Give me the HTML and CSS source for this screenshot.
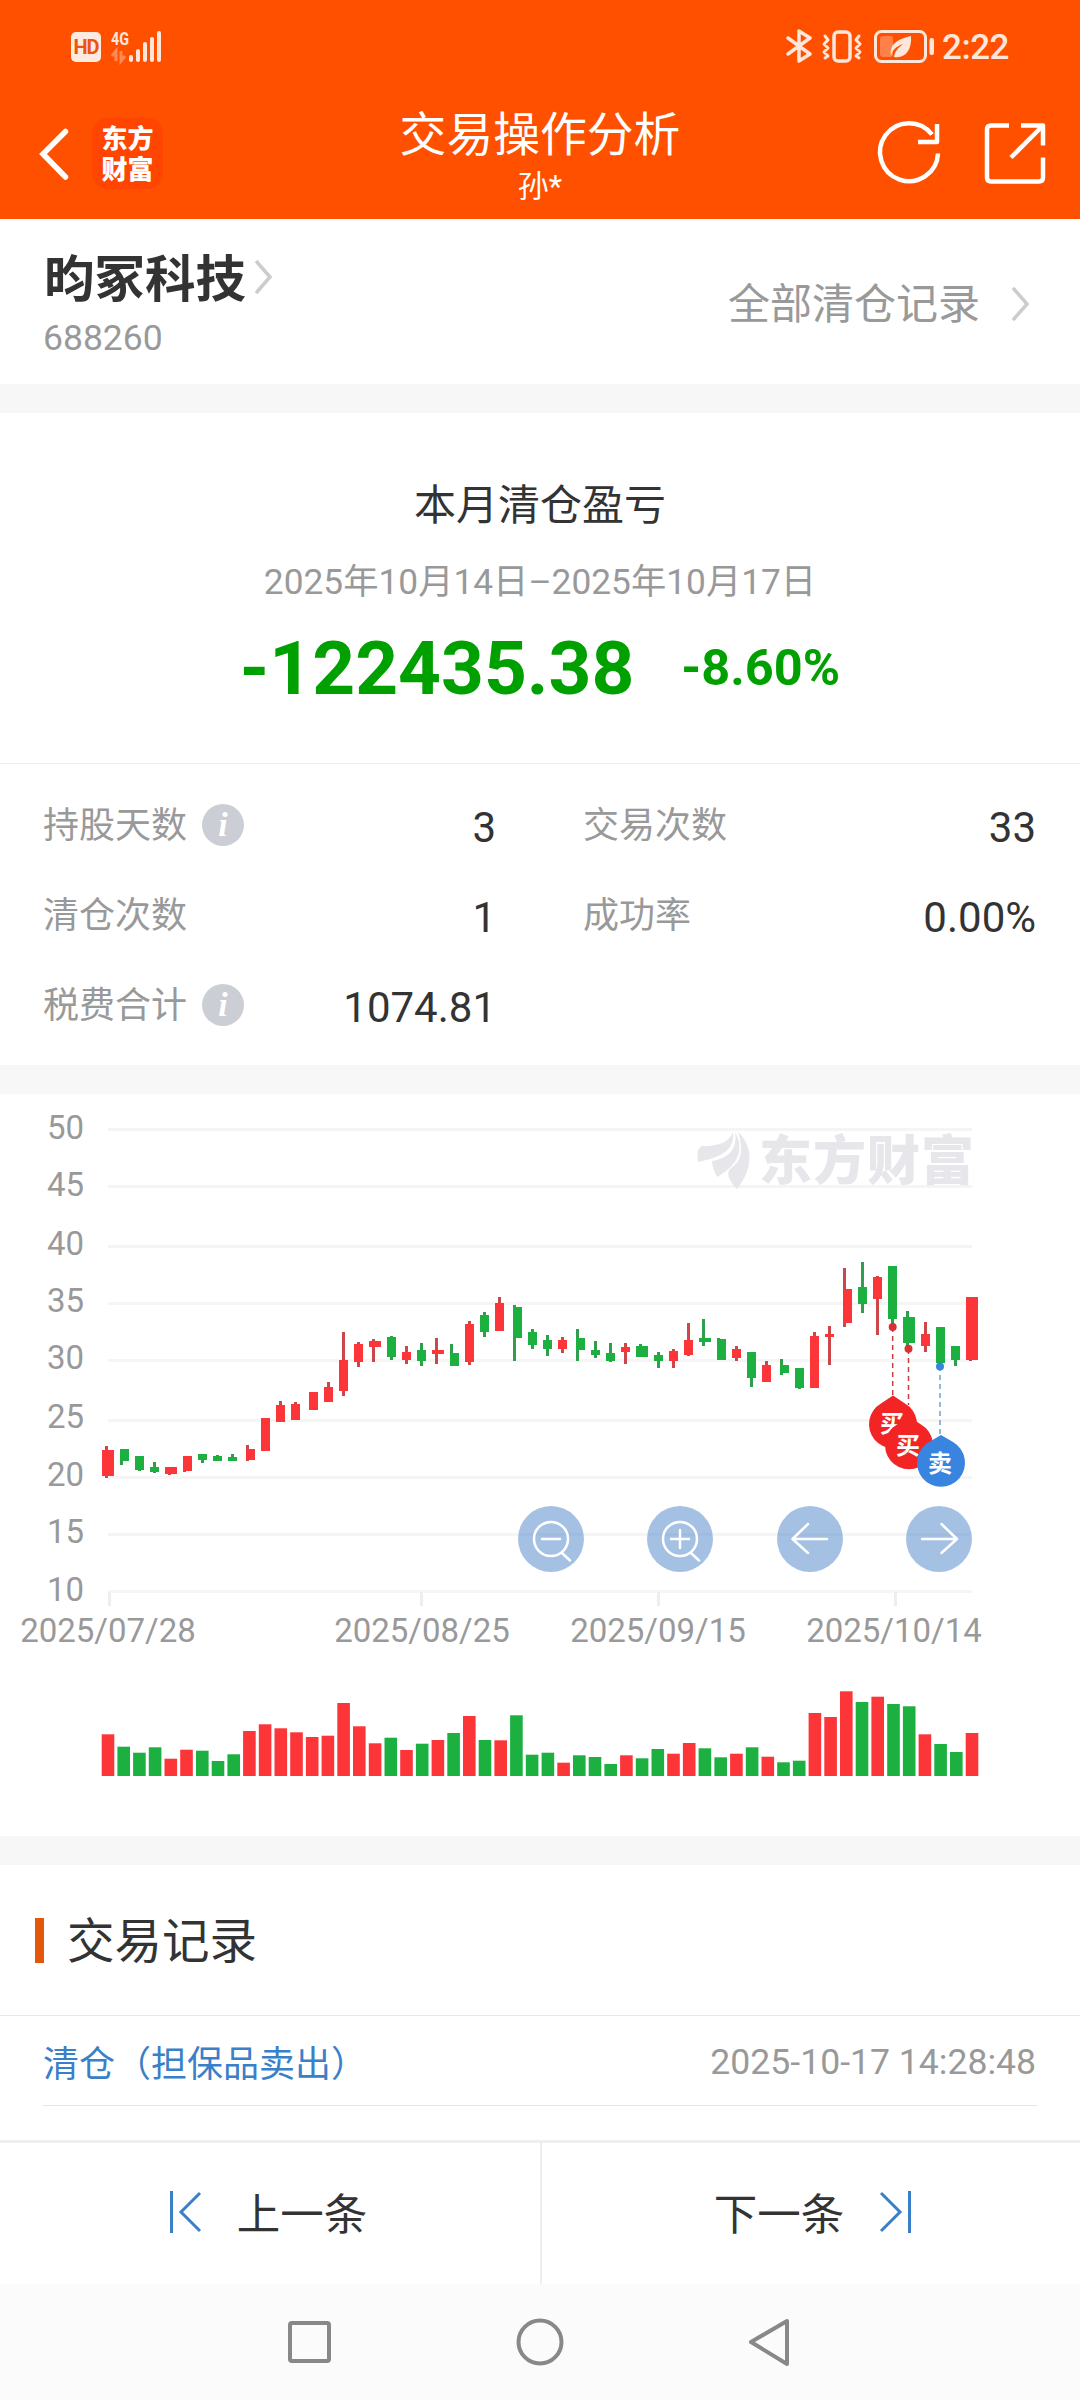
FILE: index.html
```html
<!DOCTYPE html>
<html lang="zh-CN">
<head>
<meta charset="utf-8">
<title>交易操作分析</title>
<link rel="stylesheet" href="styles.css">
</head>
<body>
<header class="header">
  <div class="statusbar">
    <div class="status-left">
      <span class="hd">HD</span>
      <svg class="signal" width="52" height="48" viewBox="110 22 52 48">
        <text class="net" x="111" y="45" textLength="18" lengthAdjust="spacingAndGlyphs">4G</text>
        <path class="signal-data" d="M112 56l4-5v10M121 51v10l4-5"/>
        <path class="signal-bars" d="M131 57v3M138 51v9M145 44v16M152 39v21M159 33v27"/>
      </svg>
    </div>
    <div class="status-right">
      <svg width="150" height="34" viewBox="785 29 150 34">
        <path class="st-line" d="M788 38l22 16-11 7V31l11 7-22 16"/>
        <rect class="st-line" x="834" y="32" width="16" height="29" rx="4"/>
        <path class="st-line thin" d="M825 36l3 4-4 4 4 4-4 4 4 4-3 2M859 36l-3 4 4 4-4 4 4 4-4 4 3 2"/>
        <rect class="st-line thin" x="875.500" y="31.500" width="50" height="30" rx="6"/>
        <rect class="charge" x="880" y="36" width="13" height="21" rx="3"/>
        <path class="leaf" d="M911 36c-13 3-22 8-20 20 1-6 6-10 12-12-5 4-8 7-9 13 12 2 18-8 17-21z"/>
        <rect class="leaf" x="929.500" y="38" width="4.500" height="17" rx="2"/>
      </svg>
      <span class="clock">2:22</span>
    </div>
  </div>
  <div class="appbar">
    <div class="appbar-left">
      <svg class="back" width="34" height="56" viewBox="38 126 34 56"><path d="M65.500 131.500L43 154l22.500 23"/></svg>
      <div class="brand"><span>东方</span><span>财富</span></div>
    </div>
    <div class="titles">
      <h1>交易操作分析</h1>
      <p>孙*</p>
    </div>
    <svg class="actions" width="180" height="70" viewBox="870 118 180 70">
      <path d="M932 134.500A29 29 0 1 0 938 153.500M937 124v18h-19"/>
      <path d="M1009 125.500h-18q-4 0-4 4v48q0 4 4 4h48q4 0 4-4v-20M1021 125.500h22v20M1043 125.500l-32 32"/>
    </svg>
  </div>
</header>

<section class="stock">
  <div>
    <div class="stock-name">昀冢科技<svg width="18" height="36" viewBox="0 0 18 36"><path d="M1 2l14 16L1 34"/></svg></div>
    <div class="stock-code">688260</div>
  </div>
  <a class="all-link">全部清仓记录<svg width="18" height="36" viewBox="0 0 18 36"><path d="M1 2l14 16L1 34"/></svg></a>
</section>

<section class="summary">
  <h2>本月清仓盈亏</h2>
  <p class="range">2025年10月14日–2025年10月17日</p>
  <div class="profit"><strong>-122435.38</strong><b>-8.60%</b></div>
</section>

<section class="stats">
  <div class="stat"><span>持股天数</span><i class="info">i</i><em>3</em></div>
  <div class="stat"><span>交易次数</span><em>33</em></div>
  <div class="stat"><span>清仓次数</span><em>1</em></div>
  <div class="stat"><span>成功率</span><em>0.00%</em></div>
  <div class="stat"><span>税费合计</span><i class="info">i</i><em>1074.81</em></div>
</section>

<section class="chart">
  <svg width="1080" height="742" viewBox="0 1094 1080 742">
    <path class="grid" d="M108 1129.500h864M108 1186.500h864M108 1246.500h864M108 1303.500h864M108 1360.500h864M108 1420.500h864M108 1477.500h864M108 1534.500h864M108 1591.500h864"/>
    <path class="grid tick" d="M109.500 1592v14M421.500 1592v14M658.500 1592v14M895.500 1592v14"/>
    <g class="mark">
      <path d="M698 1162C697 1153 698 1148 702 1146C716 1146 728 1144 733 1132C735 1150 722 1157 698 1162z"/>
      <path d="M735 1132C745 1150 738 1165 717 1177C714 1171 712 1165 712 1161C728 1158 738 1150 735 1132z"/>
      <path d="M738 1132C753 1146 754 1168 737 1189C728 1180 726 1172 731 1168C743 1160 743 1148 738 1132z"/>
      <text x="759" y="1180" textLength="215">东方财富</text>
    </g>
    <g class="axis axis-y">
      <text x="84" y="1139">50</text><text x="84" y="1196">45</text><text x="84" y="1255">40</text>
      <text x="84" y="1312">35</text><text x="84" y="1369">30</text><text x="84" y="1428">25</text>
      <text x="84" y="1486">20</text><text x="84" y="1543">15</text><text x="84" y="1601">10</text>
    </g>
    <g class="axis axis-x">
      <text x="108" y="1642">2025/07/28</text><text x="422" y="1642">2025/08/25</text>
      <text x="658" y="1642">2025/09/15</text><text x="894" y="1642">2025/10/14</text>
    </g>
    <g id="candles" shape-rendering="crispEdges"></g>
    <g id="volumes"></g>
    <g class="buy">
      <path class="dash" d="M892.700 1327v70"/><circle cx="892.700" cy="1327" r="4"/>
      <path d="M893 1395.500l12 8a24 24 0 1 1-24 0z"/>
      <text x="892" y="1432">买</text>
      <path d="M909 1416.500l12 8a24 24 0 1 1-24 0z"/>
      <path class="dash" d="M908.500 1349v56"/><circle cx="908.500" cy="1348.700" r="4"/>
      <text x="908" y="1454">买</text>
    </g>
    <g class="sell">
      <path class="dash" d="M940 1366v70"/><circle cx="940" cy="1366.500" r="4"/>
      <path d="M941 1435l12 7a24 24 0 1 1-24 0z"/>
      <text x="940" y="1472">卖</text>
    </g>
    <g class="tool">
      <circle cx="551" cy="1539" r="33"/><circle cx="680" cy="1539" r="33"/><circle cx="810" cy="1539" r="33"/><circle cx="939" cy="1539" r="33"/>
      <path d="M568 1539a17 17 0 1 0-34 0a17 17 0 1 0 34 0zM542 1539h18M562 1553l8 7.500"/>
      <path d="M697 1539a17 17 0 1 0-34 0a17 17 0 1 0 34 0zM671 1539h18M680 1530v18M691 1553l8 7.500"/>
      <path d="M827 1539h-34M808 1524l-15.500 15 15.500 14"/>
      <path d="M922 1539h34M941.500 1524l15.500 15-15.500 14"/>
    </g>
  </svg>
</section>

<section class="records">
  <h3>交易记录</h3>
  <div class="record"><span>清仓（担保品卖出）</span><time>2025-10-17 14:28:48</time></div>
</section>

<nav class="pager">
  <a><svg width="34" height="44" viewBox="0 0 34 44"><path d="M2.500 1v42M31 3L12 22l19 19"/></svg>上一条</a>
  <a>下一条<svg width="34" height="44" viewBox="0 0 34 44"><path d="M31.500 1v42M3 3l19 19L3 41"/></svg></a>
</nav>

<footer class="sysnav">
  <svg width="510" height="52" viewBox="285 2316 510 52">
    <rect x="290" y="2323" width="39" height="38" rx="2"/>
    <circle cx="540" cy="2342" r="21.500"/>
    <path d="M787 2321v43L751 2342z"/>
  </svg>
</footer>
<script src="chart.js"></script>
</body>
</html>
```
FILE: styles.css
```css
* { box-sizing: border-box; margin: 0; padding: 0; }
body {
  width: 1080px;
  height: 2400px;
  overflow: hidden;
  background: #fff;
  color: #333;
  font-family: Roboto, "Noto Sans CJK SC", sans-serif;
  display: flex;
  flex-direction: column;
}
svg { display: block; flex: none; fill: none; }
h1, h2, h3 { font-weight: 400; }

.header { height: 219px; background: #ff5000; color: #fff; }
.statusbar { height: 92px; padding: 0 71px; display: flex; justify-content: space-between; align-items: center; }
.status-left, .status-right { display: flex; align-items: center; }
.hd {
  width: 30px; height: 30px; margin: 2px 9px 0 0;
  border-radius: 5px; background: #ffeae0; color: #e8560f;
  font: 700 20px/30px Roboto, sans-serif; text-align: center; letter-spacing: -1px;
}
.net { fill: #ffe6da; font: 700 19px Roboto, sans-serif; }
.signal-data { stroke: #ff8a55; stroke-width: 3; }
.signal-bars { stroke: #ffe6da; stroke-width: 4; stroke-linecap: round; }
.st-line { stroke: #ffe6da; stroke-width: 3.5; stroke-linejoin: round; stroke-linecap: round; }
.thin { stroke-width: 3; }
.charge { fill: #ff8048; }
.leaf { fill: #ffe6da; }
.clock { margin: 3px 0 0 7px; color: #ffe6da; font-size: 35px; font-weight: 500; line-height: 36px; letter-spacing: -.5px; }
.appbar { height: 127px; padding: 0 30px 0 38px; display: grid; grid-template-columns: 240px 1fr 240px; }
.appbar-left { display: flex; gap: 20px; padding-top: 26px; }
.back { margin-top: 8px; }
.back path { stroke: #fff; stroke-width: 5.500; stroke-linecap: round; }
.brand {
  width: 71px; height: 71px; border-radius: 15px; background: #ff4500;
  display: flex; flex-direction: column; align-items: center; padding-top: 3px;
  font: 900 26px/31px "Noto Sans CJK SC", sans-serif;
}
.titles { text-align: center; padding-right: 8px; }
.titles h1 { font-size: 46.800px; line-height: 60px; margin-top: 13px; }
.titles p { font-size: 31px; line-height: 40px; margin-top: 2px; }
.actions { justify-self: end; margin-top: 26px; }
.actions path { stroke: #fff; stroke-width: 4.500; stroke-linejoin: round; }

.stock { height: 165px; padding: 0 50px 0 43px; display: flex; justify-content: space-between; align-items: flex-start; }
.stock svg path { stroke: #ccc; stroke-width: 3.500; }
.stock-name { display: flex; align-items: center; font-weight: 700; font-size: 50.500px; line-height: 64px; margin: 29px 0 0 1px; }
.stock-name svg { margin: -6px 0 0 9px; }
.stock-code { font-size: 35.500px; line-height: 44px; margin-top: 4px; color: #999; }
.all-link { display: flex; align-items: center; margin-top: 58px; font-size: 42px; line-height: 56px; color: #999; }
.all-link svg { margin: -2px 0 0 32px; }

.summary { height: 380px; border-top: 29px solid #f7f7f7; border-bottom: 1px solid #eee; text-align: center; }
.summary h2 { font-size: 42px; line-height: 60px; margin-top: 63px; }
.range { font-size: 35.300px; line-height: 50px; margin-top: 21px; color: #999; }
.profit { display: flex; justify-content: center; align-items: center; gap: 47px; height: 90px; margin-top: 16px; color: #00a000; }
.profit strong { font-size: 74.800px; font-weight: 700; }
.profit b { font-size: 50.500px; margin-top: -2px; }

.stats { height: 301px; padding: 16px 44px 0 43px; display: grid; grid-template-columns: 453px 1fr; grid-auto-rows: 90px; column-gap: 87px; }
.stat { display: flex; align-items: center; font-size: 36px; color: #999; }
.stat span { margin-top: -6px; }
.stat em { margin: 4px 0 0 auto; font-style: normal; font-size: 42px; color: #333; }
.info {
  width: 42px; height: 42px; margin-left: 15px; border-radius: 50%; background: #cbced4; color: #fff;
  font: italic 700 34px/42px "Liberation Serif", serif; text-align: center;
}

.chart { height: 800px; border-top: 29px solid #f7f7f7; border-bottom: 29px solid #f7f7f7; }
.grid { stroke: #f5f5f5; stroke-width: 3; }
.tick { stroke: #eee; }
.mark { fill: #e6e6eb; font: 900 53px "Noto Sans CJK SC", sans-serif; }
.axis { fill: #999; font-size: 33px; }
.axis-y { text-anchor: end; }
.axis-x { text-anchor: middle; }
.up { fill: #fc3539; }
.down { fill: #1bb040; }
.wick.up { fill: #cc474b; }
.wick.down { fill: #2f9e4d; }
.buy { fill: #f22424; stroke: none; }
.sell { fill: #3884df; }
.buy text, .sell text { fill: #fff; font: 700 24px "Noto Sans CJK SC", sans-serif; text-anchor: middle; }
.buy circle { fill: #d93030; }
.dash { stroke-width: 1.500; stroke-dasharray: 5 4; stroke: #c84040; }
.sell .dash { stroke: #70a0cc; }
.tool circle { fill: rgba(73, 131, 199, .5); }
.tool path { stroke: #fff; stroke-width: 2.500; stroke-linecap: round; stroke-linejoin: round; }

.records { flex: 1; }
.records h3 { height: 151px; border-bottom: 1px solid #e8e8e8; padding: 0 0 0 35px; display: flex; align-items: center; gap: 23px; font-size: 47.500px; line-height: 60px; padding-top: 4px; }
.records h3::before { content: ""; width: 9px; height: 45px; margin-top: -4px; background: #e2570a; }
.record { height: 90px; margin: 0 43px; padding-right: 1px; border-bottom: 1px solid #e8e8e8; display: flex; align-items: center; justify-content: space-between; font-size: 36px; color: #3a80c8; }
.record time { color: #999; font-size: 35.600px; margin-top: 3px; }

.pager { height: 144px; border-top: 3px solid #eee; display: grid; grid-template-columns: 542px 1fr; }
.pager a { display: flex; align-items: center; justify-content: center; gap: 34px; font-size: 43.500px; padding-bottom: 4px; }
.pager a:first-child { border-right: 2px solid #eee; padding-right: 4px; }
.pager a:last-child { padding-left: 4px; }
.pager path { stroke: #3a80c8; stroke-width: 3; }
.sysnav { height: 116px; background: #fbfbfb; display: flex; justify-content: center; align-items: center; }
.sysnav svg { stroke: #888; stroke-width: 4; stroke-linejoin: round; }
```
FILE: chart.js
```js
// Each candle: direction, body left/width/top/bottom, wick left/top/bottom
const candles = [
  ['u',102,12,1450,1476,105,1446,1478],['d',120,9,1449,1461,120,1449,1465],['d',135,9,1456,1470,138,1456,1471],
  ['d',150,9,1467,1472,153,1462,1473],['u',165,12,1467,1474,168,1467,1475],['u',183,9,1456,1471,183,1456,1472],
  ['d',198,9,1454,1460,201,1454,1463],['d',213,9,1456,1461,216,1455,1461],['d',228,9,1457,1461,231,1454,1461],
  ['u',246,9,1449,1460,246,1445,1461],['u',261,9,1418,1451,264,1418,1451],['u',276,9,1405,1422,279,1401,1422],
  ['u',291,9,1404,1420,294,1402,1420],['u',309,9,1392,1410,312,1392,1410],['u',324,9,1387,1402,327,1382,1402],
  ['u',339,9,1360,1391,342,1332,1396],['u',354,9,1344,1362,357,1342,1367],['u',369,12,1341,1347,372,1339,1362],
  ['d',387,9,1337,1357,390,1336,1360],['u',402,9,1352,1360,405,1346,1364],['d',417,9,1350,1361,420,1343,1366],
  ['u',432,12,1350,1354,435,1338,1364],['d',450,9,1353,1366,450,1344,1366],['u',465,9,1324,1362,468,1321,1365],
  ['d',480,9,1315,1332,483,1312,1337],['u',495,9,1303,1331,498,1297,1331],['d',513,9,1307,1338,513,1305,1361],
  ['d',528,9,1332,1345,531,1329,1349],['d',543,9,1340,1349,546,1335,1356],['u',558,9,1340,1349,561,1337,1353],
  ['d',576,9,1338,1350,576,1329,1361],['d',591,9,1350,1355,594,1341,1358],['d',606,9,1353,1361,609,1343,1362],
  ['u',621,9,1347,1352,624,1343,1364],['d',636,12,1346,1357,639,1344,1357],['d',654,9,1355,1361,657,1352,1368],
  ['u',669,9,1351,1361,672,1349,1368],['u',684,9,1340,1355,687,1323,1356],['d',699,12,1338,1342,702,1319,1346],
  ['d',717,9,1339,1360,717,1338,1360],['u',732,9,1349,1358,735,1346,1361],['d',747,9,1352,1378,750,1352,1387],
  ['u',762,9,1365,1382,765,1361,1382],['d',780,9,1365,1373,780,1359,1375],['d',795,9,1368,1388,798,1368,1389],
  ['u',810,9,1336,1388,813,1332,1388],['u',825,9,1334,1337,828,1326,1365],['u',843,9,1289,1323,843,1268,1327],
  ['d',858,9,1287,1304,861,1262,1313],['u',873,9,1277,1299,876,1276,1335],['d',888,9,1266,1319,891,1266,1325],
  ['d',903,12,1317,1343,906,1311,1347],['u',921,9,1334,1346,924,1322,1352],['d',936,9,1327,1363,939,1327,1364],
  ['d',951,9,1346,1360,954,1346,1366],['u',966,12,1297,1360,969,1297,1361]
];
const volumes = [
  125,88,70,86,52,79,76,45,65,135,155,143,131,117,121,219,149,98,115,78,97,108,129,180,108,107,182,64,
  70,40,62,57,36,62,53,81,67,99,83,56,67,86,58,41,46,189,177,254,222,238,216,209,125,96,72,129
];
const rect = (cls, x, y, w, h) => `<rect class="${cls}" x="${x}" y="${y}" width="${w}" height="${h}"/>`;
const dir = { u: 'up', d: 'down' };

document.getElementById('candles').innerHTML = candles.map(([c, x, w, top, bottom, wx, wt, wb]) =>
  rect('wick ' + dir[c], wx, wt, 3, wb - wt) + rect(dir[c], x, top, w, bottom - top)).join('');

document.getElementById('volumes').innerHTML = volumes.map((v, i) =>
  rect(dir[candles[i][0]], (101.7 + i * 864 / 55).toFixed(1), (1776 - v / 3).toFixed(1), 12.6, (v / 3).toFixed(1))).join('');
```
